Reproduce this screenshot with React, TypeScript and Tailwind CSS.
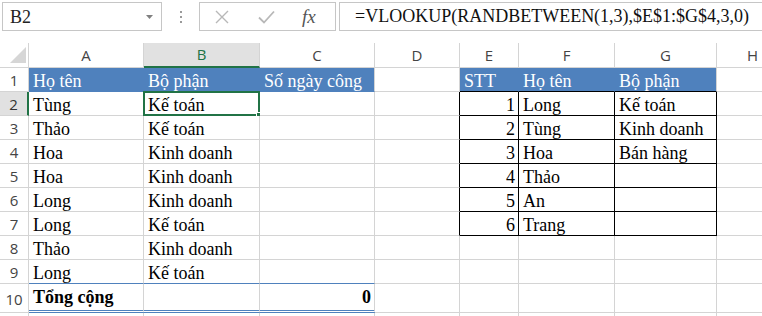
import React from 'react';

type Side = 'g' | 'k' | 'b';
type CellSpec = {
  text?: string;
  bg?: 'blue';
  r?: Side;
  bt?: Side | 'dbl';
  right?: boolean;
  bold?: boolean;
  white?: boolean;
};

const R: Record<Side, string> = {
  g: 'border-r-[#d4d4d4]',
  k: 'border-r-black',
  b: 'border-r-[#4f81bd]',
};
const B: Record<Side | 'dbl', string> = {
  g: 'border-b-[#d4d4d4]',
  k: 'border-b-black',
  b: 'border-b-[#4f81bd]',
  dbl: 'border-b-[3px] border-double border-b-[#4f81bd]',
};

const COLS = 'grid grid-cols-[29px_115px_116px_115px_85px_59px_96px_102px_72px]';
const letters = ['A', 'B', 'C', 'D', 'E', 'F', 'G', 'H'];

const left: [string, string][] = [
  ['Tùng', 'Kế toán'],
  ['Thảo', 'Kế toán'],
  ['Hoa', 'Kinh doanh'],
  ['Hoa', 'Kinh doanh'],
  ['Long', 'Kinh doanh'],
  ['Long', 'Kế toán'],
  ['Thảo', 'Kinh doanh'],
  ['Long', 'Kế toán'],
];

const lookup: [string, string, string][] = [
  ['1', 'Long', 'Kế toán'],
  ['2', 'Tùng', 'Kinh doanh'],
  ['3', 'Hoa', 'Bán hàng'],
  ['4', 'Thảo', ''],
  ['5', 'An', ''],
  ['6', 'Trang', ''],
];

function buildRows(): CellSpec[][] {
  const rows: CellSpec[][] = [];
  // row 1: the two table headers
  rows.push([
    { text: 'Họ tên', bg: 'blue', r: 'b', bt: 'b', white: true },
    { text: 'Bộ phận', bg: 'blue', r: 'b', bt: 'b', white: true },
    { text: 'Số ngày công', bg: 'blue', r: 'g', bt: 'b', white: true },
    { r: 'g' },
    { text: 'STT', bg: 'blue', r: 'b', bt: 'k', white: true },
    { text: 'Họ tên', bg: 'blue', r: 'b', bt: 'k', white: true },
    { text: 'Bộ phận', bg: 'blue', r: 'g', bt: 'k', white: true },
    {},
  ]);
  for (let i = 0; i < 9; i++) {
    const l = left[i];
    const lk = lookup[i];
    const inTable = i < 6;
    const lastLeft = i === 7;
    const row: CellSpec[] = l
      ? [
          { text: l[0], bt: lastLeft ? 'b' : 'g' },
          { text: l[1], bt: lastLeft ? 'b' : 'g' },
          { bt: lastLeft ? 'b' : 'g' },
        ]
      : [
          { text: 'Tổng cộng', bold: true, bt: 'dbl' },
          { bt: 'dbl' },
          { text: '0', bold: true, right: true, bt: 'dbl' },
        ];
    row.push({ r: inTable ? 'k' : 'g' });
    if (inTable) {
      row.push({ text: lk[0], right: true, r: 'k', bt: 'k' });
      row.push({ text: lk[1], r: 'k', bt: 'k' });
      row.push({ text: lk[2], r: 'k', bt: 'k' });
    } else {
      row.push({}, {}, {});
    }
    row.push({});
    rows.push(row);
  }
  rows.push([{}, {}, {}, {}, {}, {}, {}, {}]);
  return rows;
}

function Cell({ c, h, children }: { c: CellSpec; h: string; children?: React.ReactNode }) {
  return (
    <div
      className={`relative border-r border-b ${R[c.r ?? 'g']} ${B[c.bt ?? 'g']} ${h} ${
        c.bg === 'blue' ? 'bg-[#4f81bd]' : 'bg-white'
      } ${c.white ? 'text-white' : 'text-black'} ${c.bold ? 'font-bold' : ''} ${
        c.right ? 'text-right pr-[3px]' : 'pl-[4px]'
      } whitespace-nowrap overflow-visible leading-[26px] text-[18px]`}
    >
      {c.text}
      {children}
    </div>
  );
}

function FormulaBar() {
  return (
    <div className="flex items-start h-[43px] pt-[2px] bg-white font-['Liberation_Serif',serif]">
      <div className="ml-[2px] w-[160px] h-[29px] border border-[#c6c6c6] flex items-center justify-between pl-[7px] pr-[8px]">
        <span className="text-[18px] text-[#222] leading-none">B2</span>
        <svg width="7" height="4" viewBox="0 0 7 4">
          <path d="M0 0 L7 0 L3.5 4 Z" fill="#808080" />
        </svg>
      </div>
      <div className="w-[37px] h-[29px] flex flex-col items-center justify-center gap-[3px]">
        <span className="w-[2px] h-[2px] bg-[#9a9a9a]" />
        <span className="w-[2px] h-[2px] bg-[#9a9a9a]" />
        <span className="w-[2px] h-[2px] bg-[#9a9a9a]" />
      </div>
      <div className="w-[137px] h-[29px] border border-[#c6c6c6] flex items-center">
        <svg className="ml-[14px]" width="16" height="14" viewBox="0 0 16 14">
          <path d="M2 1 L14 13 M14 1 L2 13" stroke="#b8b8b8" strokeWidth="1.4" fill="none" />
        </svg>
        <svg className="ml-[28px]" width="17" height="14" viewBox="0 0 17 14">
          <path d="M1 7.5 L6 12.5 L16 1.5" stroke="#b8b8b8" strokeWidth="1.8" fill="none" />
        </svg>
        <span className="ml-[27px] italic text-[19px] text-[#555] leading-none">fx</span>
      </div>
      <div className="ml-[3px] flex-1 h-[29px] border border-r-0 border-[#c6c6c6] pl-[15px] flex items-center">
        <span className="text-[18px] text-[#111] whitespace-nowrap">
          =VLOOKUP(RANDBETWEEN(1,3),$E$1:$G$4,3,0)
        </span>
      </div>
    </div>
  );
}

export default function App() {
  const rows = buildRows();
  return (
    <div className="w-[762px] h-[316px] overflow-hidden bg-white">
      <FormulaBar />
      <div className="font-['Liberation_Serif',serif]">
        {/* column headers */}
        <div className={`${COLS} h-[25px] font-['Open_Sans',sans-serif] text-[15px] text-[#444]`}>
          <div className="relative border-r border-b border-r-[#d4d4d4] border-b-[#d4d4d4]">
            <svg className="absolute left-[10px] top-[4px]" width="16" height="16" viewBox="0 0 16 16">
              <path d="M16 0 L16 16 L0 16 Z" fill="#d6d6d6" />
            </svg>
          </div>
          {letters.map(l => (
            <div
              key={l}
              className={
                l === 'B'
                  ? 'flex items-center justify-center bg-[#e1e1e1] border-r border-r-[#d4d4d4] border-b-2 border-b-[#217346] text-[#217346]'
                  : 'flex items-center justify-center border-r border-b border-r-[#d4d4d4] border-b-[#d4d4d4]'
              }
            >
              {l}
            </div>
          ))}
        </div>
        {rows.map((row, i) => {
          const h = i === 9 ? 'h-[29px]' : 'h-[24px]';
          return (
            <div key={i} className={COLS}>
              <div
                className={`${h} flex items-center justify-center pt-[2px] font-['Open_Sans',sans-serif] text-[15px] border-b border-b-[#d4d4d4] ${
                  i === 1
                    ? 'bg-[#e1e1e1] border-r-2 border-r-[#217346] text-[#333]'
                    : 'border-r border-r-[#d4d4d4] text-[#444]'
                }`}
              >
                {i < 10 ? i + 1 : ''}
              </div>
              {row.map((c, j) => (
                <Cell key={j} c={c} h={h}>
                  {i === 1 && j === 1 && (
                    <>
                      <div className="absolute -left-[1px] -top-[1px] w-[117px] h-[25px] border-2 border-[#217346] pointer-events-none" />
                      <div className="absolute -right-[4px] -bottom-[4px] w-[7px] h-[7px] bg-[#217346] border border-white" />
                    </>
                  )}
                </Cell>
              ))}
            </div>
          );
        })}
      </div>
    </div>
  );
}
